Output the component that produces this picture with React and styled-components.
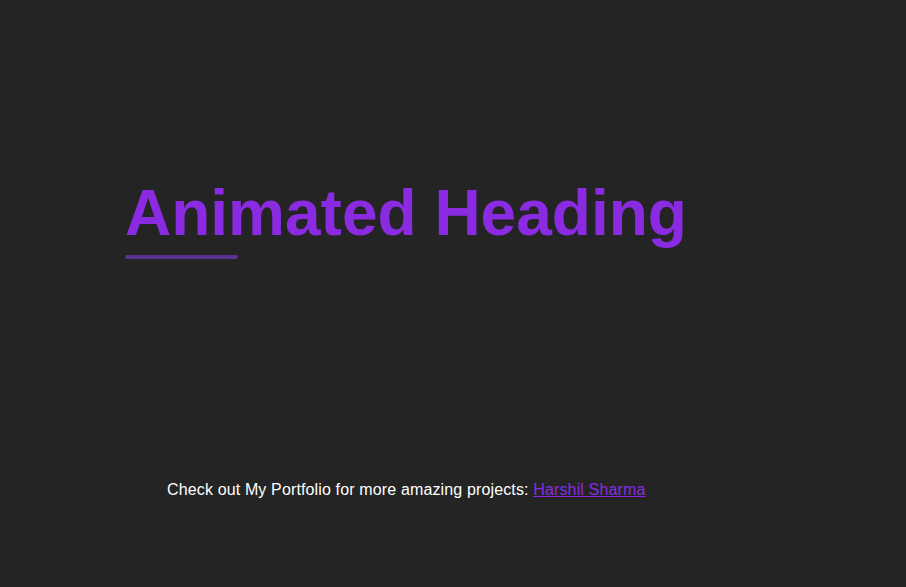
import styled, { createGlobalStyle } from "styled-components";

const GlobalStyle = createGlobalStyle`
  html, body {
    margin: 0;
    padding: 0;
    background: #242424;
  }
  body {
    font-family: "Liberation Sans", Arial, sans-serif;
  }
`;

const Page = styled.div`
  width: 906px;
  height: 587px;
  background: #242424;
  display: flex;
  flex-direction: column;
  box-sizing: border-box;
  padding: 178px 0 0 125px;
`;

const HeadingBlock = styled.div`
  display: flex;
  flex-direction: column;
  align-items: flex-start;
`;

const Heading = styled.h1`
  margin: 0;
  font-size: 64px;
  font-weight: 700;
  line-height: 1.117;
  color: #8a2be2;
`;

const Bar = styled.div`
  width: 113px;
  height: 4px;
  margin-top: 6px;
  border-radius: 3px;
  background: #5b3194;
`;

const Footer = styled.p`
  margin: 222px 0 0 42px;
  font-size: 16px;
  line-height: 18px;
  letter-spacing: 0.14px;
  color: #ffffff;
`;

const FooterLink = styled.a`
  color: #8a2be2;
  text-decoration: underline;
`;

export default function App() {
  return (
    <>
      <GlobalStyle />
      <Page>
        <HeadingBlock>
          <Heading>Animated Heading</Heading>
          <Bar />
        </HeadingBlock>
        <Footer>
          Check out My Portfolio for more amazing projects:{" "}
          <FooterLink href="#">Harshil Sharma</FooterLink>
        </Footer>
      </Page>
    </>
  );
}
